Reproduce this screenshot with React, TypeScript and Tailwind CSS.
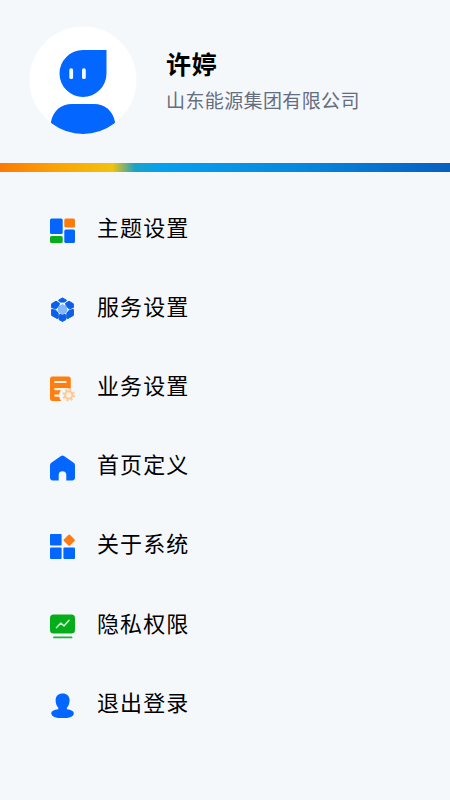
import { useState } from "react";

const ThemeIcon = () => (
  <svg viewBox="0 0 25 25" className="w-full h-full">
    <rect x="0" y="0.5" width="12.7" height="15.6" rx="1.6" fill="#0365fd" />
    <rect x="14.3" y="0.5" width="10.7" height="9" rx="1.6" fill="#fd7b09" />
    <rect x="0" y="18" width="12.7" height="7" rx="1.6" fill="#09ac1c" />
    <rect x="14.3" y="11.4" width="10.7" height="13.6" rx="1.6" fill="#0365fd" />
  </svg>
);

const ServiceIcon = () => (
  <svg viewBox="0 0 25 25" className="w-full h-full overflow-visible">
    <g fill="#0b5fe8" stroke="#0b5fe8" strokeWidth="1" strokeLinejoin="round">
      <path d="M12.5 .9l4 2.300-1.800 1.900h-4.400L8.500 3.200z" />
      <path d="M6 4.200l3.400 2-.6 3-3 2.600-4.200-1.200V6.800z" />
      <path d="M19 4.200l-3.400 2 .6 3 3 2.600 4.200-1.200V6.800z" />
      <path d="M1.600 12.400l4.200.8 2.400 3.200v4.600l-1 .6-5.600-3.200z" />
      <path d="M23.400 12.400l-4.200.8-2.400 3.200v4.600l1 .6 5.600-3.200z" />
      <path d="M9.600 17.500h5.800l.6 1v4l-3.500 2-3.500-2v-4z" />
    </g>
    <path
      d="M12.500 8l3.800 2.200v4.600l-3.800 2.200-3.800-2.200v-4.600z"
      fill="#85b7f8"
      stroke="#85b7f8"
      strokeWidth="1.8"
      strokeLinejoin="round"
    />
  </svg>
);

const BusinessIcon = () => (
  <svg viewBox="0 0 25 25" className="w-full h-full overflow-visible">
    <path
      d="M2.5 .5h15.8a2.5 2.5 0 0 1 2.500 2.500v9.500H13a8 8 0 0 0-1.500 12.500H2.500A2.500 2.500 0 0 1 0 22.500V3A2.500 2.500 0 0 1 2.500 .5z"
      fill="#fd7f12"
    />
    <path d="M5.200 6h10.400M5.200 13.200h12M5.200 19.600h4.600" stroke="#fff4e6" strokeWidth="2.2" strokeLinecap="round" />
    <circle cx="18.7" cy="19" r="6.3" fill="#f5f8fb" />
    <circle cx="18.7" cy="19" r="3.7" fill="#fff1dc" stroke="#fdc898" strokeWidth="2.1" />
    <circle cx="18.7" cy="19" r="5.3" fill="none" stroke="#fdc898" strokeWidth="2" strokeDasharray="2.081 2.081" />
  </svg>
);

const HomeIcon = () => (
  <svg viewBox="0 0 25 25" className="w-full h-full overflow-visible">
    <path
      d="M11 1a2.600 2.600 0 0 1 3 0l9.700 6.700A3 3 0 0 1 25 10.200v12.400a2.800 2.800 0 0 1-2.800 2.800H16.300v-5.300a3.800 3.800 0 0 0-7.600 0v5.300H2.800A2.800 2.800 0 0 1 0 22.600V10.200a3 3 0 0 1 1.300-2.500z"
      fill="#0366fe"
    />
  </svg>
);

const AboutIcon = () => (
  <svg viewBox="0 0 25 25" className="w-full h-full overflow-visible">
    <rect x="0" y="0" width="11.6" height="11.6" rx="1" fill="#0366fe" />
    <rect x="0" y="13.5" width="11.6" height="11.5" rx="1" fill="#0366fe" />
    <rect x="13.4" y="13.5" width="11.6" height="11.5" rx="1" fill="#0366fe" />
    <rect x="14.9" y="1.9" width="8.6" height="8.6" rx="1" fill="#fd7b12" transform="rotate(45 19.2 6.2)" />
  </svg>
);

const PrivacyIcon = () => (
  <svg viewBox="0 0 25 25" className="w-full h-full overflow-visible">
    <rect x="0" y="0.6" width="25" height="19" rx="3.6" fill="#06ad1b" />
    <path d="M6.4 13.7l4.4-4.6 3.2 2.8 5-5.6" fill="none" stroke="#c6f5cb" strokeWidth="1.5" strokeLinecap="round" strokeLinejoin="round" />
    <path d="M4 23.4h17.5" stroke="#1cb436" strokeWidth="1.9" strokeLinecap="round" />
  </svg>
);

const LogoutIcon = () => (
  <svg viewBox="0 0 25 25" className="w-full h-full overflow-visible">
    <path
      d="M12.6 .4c4.200 0 7 2.700 7 6.700 0 3.300-1 5.900-2.700 7.700v1.500c4.400.5 6.900 1.900 6.900 4.100 0 3-4.400 4.700-11.200 4.700S1.300 23.400 1.300 20.400c0-2.200 2.600-3.600 7-4.100v-1.500C6.600 13 5.600 10.400 5.600 7.100 5.600 3.100 8.400 .4 12.600 .4z"
      fill="#0366fe"
    />
  </svg>
);

const Avatar = () => (
  <svg viewBox="0 0 108 108" className="w-[108px] h-[108px]">
    <circle cx="54" cy="54" r="53.5" fill="#ffffff" />
    <path d="M54 24h23.5v23.5A23.5 23.5 0 1 1 54 24z" fill="#0366fe" />
    <rect x="40.3" y="42.3" width="3.8" height="10.8" rx="1.7" fill="#eef8ff" />
    <rect x="53" y="42.3" width="3.8" height="10.8" rx="1.7" fill="#eef8ff" />
    <path d="M43 78h22c11 0 19 7 21 17.800q.2 1-.8 1.700Q71 108 54 108T22.800 97.500q-1-.7-.8-1.700C24 85 32 78 43 78z" fill="#0366fe" />
  </svg>
);

const App = () => {
  const [menu] = useState([
    { id: 1, name: "主题设置", icon: <ThemeIcon /> },
    { id: 2, name: "服务设置", icon: <ServiceIcon /> },
    { id: 3, name: "业务设置", icon: <BusinessIcon /> },
    { id: 4, name: "首页定义", icon: <HomeIcon /> },
    { id: 5, name: "关于系统", icon: <AboutIcon /> },
    { id: 6, name: "隐私权限", icon: <PrivacyIcon /> },
    { id: 7, name: "退出登录", icon: <LogoutIcon /> },
  ]);
  return (
    <div className="w-full h-screen overflow-hidden bg-[#f4f8fb] font-['Noto_Sans_CJK_SC',sans-serif]">
      <div className="flex h-[163px] pt-[26px] pl-[29px]">
        <Avatar />
        <div className="ml-[29px] pt-[19px]">
          <h1 className="text-[25px] leading-9 font-bold tracking-[0.8px] text-black">许婷</h1>
          <p className="mt-px text-[19px] leading-9 tracking-[0.38px] text-[#666d80]">山东能源集团有限公司</p>
        </div>
      </div>
      <div className="h-[9px] bg-[linear-gradient(90deg,#fb7a05_0%,#fba105_12%,#f3c20c_25%,#18a3c8_30%,#06a0f0_36%,#0689e0_65%,#0560c0_100%)]" />
      <ul className="pt-[19px]">
        {menu.map((item) => (
          <li key={item.id} className="flex items-center h-[79.1px] pl-[50px]">
            <div className="w-[25px] h-[25px]">{item.icon}</div>
            <span className="ml-[22px] pb-[9px] text-[22px] leading-8 tracking-[1.1px] text-black">
              {item.name}
            </span>
          </li>
        ))}
      </ul>
    </div>
  );
};

export default App;
